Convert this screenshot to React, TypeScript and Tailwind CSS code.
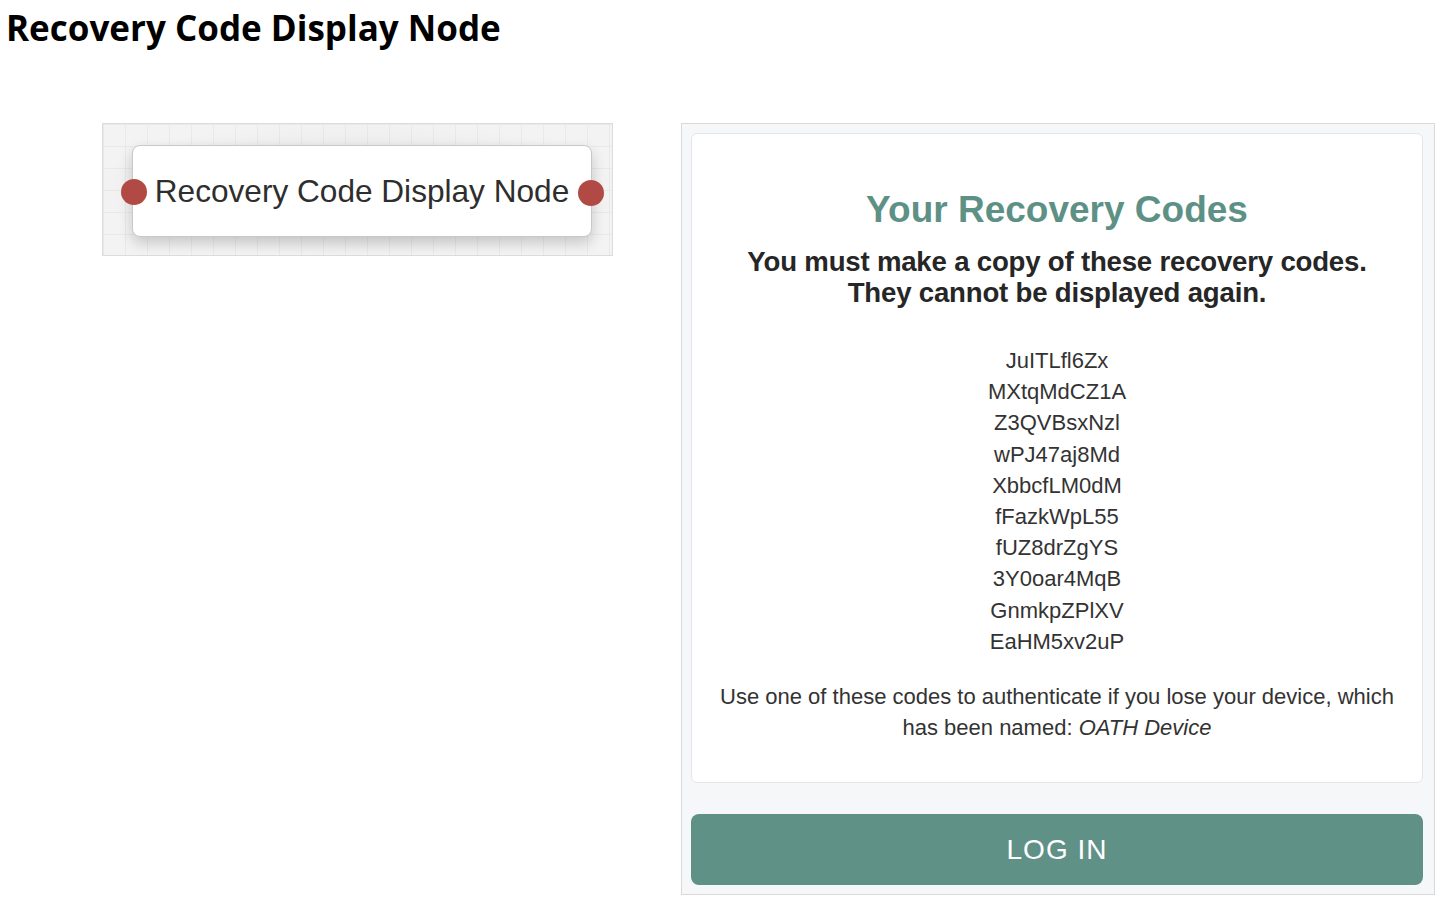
const codes = [
  'JuITLfl6Zx',
  'MXtqMdCZ1A',
  'Z3QVBsxNzl',
  'wPJ47aj8Md',
  'XbbcfLM0dM',
  'fFazkWpL55',
  'fUZ8drZgYS',
  '3Y0oar4MqB',
  'GnmkpZPlXV',
  'EaHM5xv2uP'
]

const sans = { fontFamily: '"Liberation Sans", Arial, sans-serif' }

function Dot() {
  return <span className="block w-[26px] h-[26px] rounded-full bg-[#b14a45]" />
}

export default function App() {
  return (
    <main className="w-[1443px] h-[901px] bg-white relative overflow-hidden">
      <h1
        className="absolute left-[6px] top-[3px] text-[35px] leading-[50px] font-bold text-black"
        style={{ fontFamily: '"Open Sans", sans-serif' }}
      >
        Recovery Code Display Node
      </h1>

      <div className="flex items-start pt-[123px]">
        {/* canvas with node */}
        <div
          className="ml-[102px] w-[511px] h-[133px] border border-[#dcdcdc] bg-[#f3f3f3] flex items-start pt-[21px] pl-[29px]"
          style={{
            backgroundImage:
              'radial-gradient(ellipse at center, rgba(0,0,0,0.07), transparent 75%), linear-gradient(#e9e9e9 1px, transparent 1px), linear-gradient(90deg, #e9e9e9 1px, transparent 1px)',
            backgroundSize: '100% 100%, 22px 22px, 22px 22px'
          }}
        >
          <div className="relative w-[460px] h-[92px] bg-white rounded-[8px] border border-[#c8c8c8] shadow-[0_6px_14px_rgba(0,0,0,0.18)] flex items-center justify-center pt-[2px]">
            <div className="absolute -left-[12px] top-[33px]">
              <Dot />
            </div>
            <div className="absolute -right-[13px] top-[34px]">
              <Dot />
            </div>
            <span className="text-[31.6px] text-[#2e2e2e]" style={sans}>
              Recovery Code Display Node
            </span>
          </div>
        </div>

        {/* login form preview */}
        <div
          className="ml-[68px] w-[754px] h-[772px] border border-[#d9d9d9] bg-[#f6f7f9] p-[9px] pr-[11px] flex flex-col"
          style={sans}
        >
          <div className="h-[650px] bg-white border border-[#e3e5e8] rounded-[6px] flex flex-col items-center pt-[55px] text-center">
            <h2 className="text-[37px] leading-[42px] font-bold text-[#5e9186]">
              Your Recovery Codes
            </h2>
            <p className="mt-[15px] text-[27.6px] leading-[31px] font-bold text-[#262626] tracking-[-0.2px]">
              You must make a copy of these recovery codes.
              <br />
              They cannot be displayed again.
            </p>
            <ul className="mt-[37px] text-[22px] leading-[31.2px] text-[#333]">
              {codes.map((c) => (
                <li key={c}>{c}</li>
              ))}
            </ul>
            <p className="mt-[24px] text-[22px] leading-[31px] text-[#333] px-[10px]">
              Use one of these codes to authenticate if you lose your device, which
              <br />
              has been named: <em>OATH Device</em>
            </p>
          </div>
          <button className="mt-[31px] h-[71px] w-full rounded-[8px] bg-[#5f9187] text-white text-[28px] tracking-[1px]">
            LOG IN
          </button>
        </div>
      </div>
    </main>
  )
}
